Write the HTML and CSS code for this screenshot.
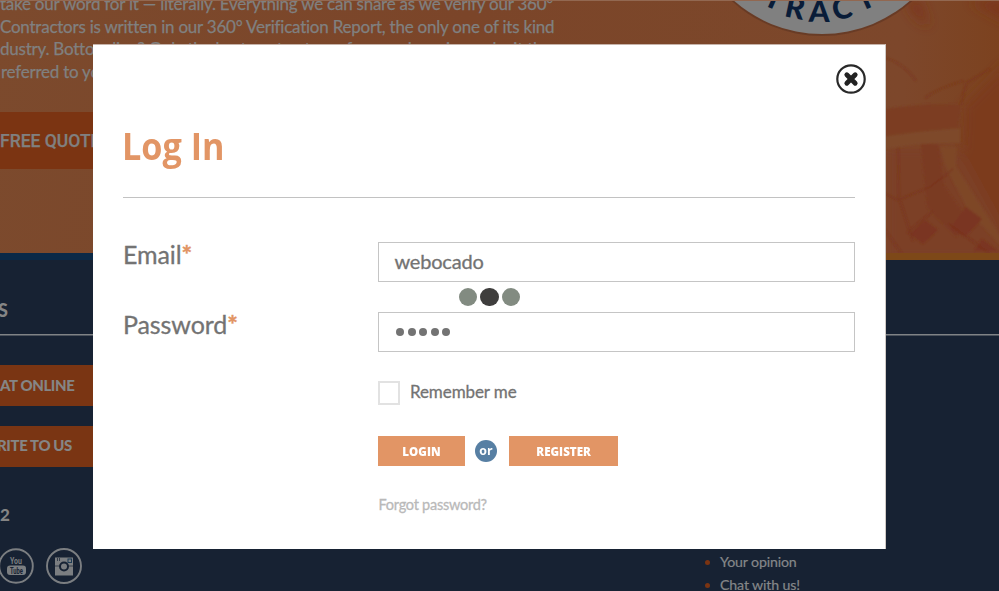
FILE: index.html
```
<!DOCTYPE html>
<html lang="en">
<head>
<meta charset="utf-8">
<title>Log In</title>
<link rel="stylesheet" href="styles.css">
</head>
<body>
<div class="page">
  <section class="hero">
    <svg class="photo" viewBox="0 0 319 253" aria-hidden="true">
      <defs>
        <linearGradient id="warm" x1="0" x2="1"><stop offset="0" stop-color="#7d472b" stop-opacity="0"/><stop offset=".7" stop-color="#7d472b"/><stop offset="1" stop-color="#7c421f"/></linearGradient>
        <filter id="soft"><feGaussianBlur stdDeviation="6"/></filter>
        <filter id="fine"><feGaussianBlur stdDeviation="1.1"/></filter>
      </defs>
      <rect width="319" height="253" fill="url(#warm)"/>
      <g filter="url(#soft)">
        <path d="M284 105L330 60V260L282 170Z" fill="#7c3b1a"/>
        <path d="M225 0H240L249 26L236 16Z M290 0H330V22Z" fill="#7b351b"/>
        <path d="M205 145H278L330 240V260H205Z" fill="#7c4127"/>
      </g>
      <g filter="url(#fine)">
        <path d="M200 109Q245 101 281 104L278 127Q240 130 200 136Z" fill="#7b3c22"/>
        <path d="M200 136Q240 130 280 127V142Q240 141 200 149Z" fill="#7e4829"/>
        <path d="M241 143H258L264 185L290 222L276 236L247 206Z" fill="#7a3a21"/>
        <path d="M260 145L277 146L276 165L325 242V250L288 209L265 165Z" fill="#7e4627"/>
        <path d="M286 206L302 218L285 236L270 228Z M245 219L258 229L243 243L230 233Z M302 238L318 250H294Z" fill="#7a3420"/>
        <path d="M200 190L218 199L250 186L273 168M218 146L219 197L233 240M281 104L286 82L310 68M200 55Q225 62 236 80M283 80Q258 87 245 97M205 229L222 253M227 232L253 210M268 222L310 253" fill="none" stroke="#78311c" stroke-width="1.2" opacity=".8"/>
      </g>
    </svg>
    <div class="pitch">
      <p class="l1">take our word for it — literally. Everything we can share as we verify our 360°</p>
      <p class="l2">Contractors is written in our 360° Verification Report, the only one of its kind</p>
      <p class="l3">dustry. Bottom line? Only the best contractors of any real service make it the</p>
      <p class="l4">referred to you.</p>
      <a class="quote">FREE QUOTE</a>
    </div>
    <svg class="seal" viewBox="0 0 200 40" aria-hidden="true">
      <circle cx="94" cy="-98" r="134" fill="#4c2b1d" opacity=".4"/>
      <circle cx="94" cy="-99" r="133" fill="#808080"/>
      <g class="seal-text">
        <text transform="translate(42 8) rotate(24)">T</text>
        <text transform="translate(65 18) rotate(12)">R</text>
        <text transform="translate(91 22) rotate(1)">A</text>
        <text transform="translate(116 18.500) rotate(-11)">C</text>
        <text transform="translate(141 8) rotate(-24)">T</text>
      </g>
    </svg>
  </section>
  <div class="strip"><span></span><span></span></div>
  <footer class="footer">
    <div class="contact">
      <h3>S</h3>
      <a class="btn">AT ONLINE</a>
      <a class="btn second">RITE TO US</a>
      <p class="phone">2</p>
      <div class="social">
        <svg width="36" height="36" viewBox="0 0 36 36">
          <circle cx="18" cy="18" r="16.800" fill="none" stroke="#7b7e81" stroke-width="1.900"/>
          <text class="you" x="12" y="16" textLength="12" lengthAdjust="spacingAndGlyphs">You</text>
          <rect x="9" y="17.500" width="19" height="9.500" rx="3" fill="#7b7e81"/>
          <text class="tube" x="12" y="25.500" textLength="13" lengthAdjust="spacingAndGlyphs">Tube</text>
        </svg>
        <svg width="36" height="36" viewBox="0 0 36 36">
          <circle cx="18" cy="18" r="17" fill="none" stroke="#7b7e81" stroke-width="1.900"/>
          <path d="M9 9.500h18v18h-18z" fill="#7b7e81"/>
          <path d="M9 18h5M22 18h5M11.500 10v3M13.500 10v3" stroke="#172233" stroke-width=".7"/>
          <rect x="22" y="11" width="3.500" height="3.500" fill="none" stroke="#1c3b55" stroke-width="1"/>
          <circle cx="18" cy="18.500" r="4" fill="#7b7e81" stroke="#172233" stroke-width="2"/>
        </svg>
      </div>
    </div>
    <ul class="links"><li>Your opinion</li><li>Chat with us!</li></ul>
  </footer>
</div>

<div class="modal">
  <div class="close">
    <svg width="32" height="32" viewBox="0 0 32 32"><circle cx="16" cy="16" r="13.700" fill="#fff" stroke="#292929" stroke-width="2.200"/><path d="M11.800 11.800l8.400 8.400M20.200 11.800l-8.400 8.400" stroke="#222" stroke-width="4.800" stroke-linecap="round"/></svg>
  </div>
  <h1><span>Log In</span></h1>
  <form class="form">
    <label class="name">Email<b>*</b></label>
    <div class="field">webocado</div>
    <div class="dots"><i></i><i class="on"></i><i></i></div>
    <label class="name">Password<b>*</b></label>
    <div class="field pass"><i></i><i></i><i></i><i></i><i></i></div>
    <div class="rest">
      <div class="remember"><span class="box"></span><span>Remember me</span></div>
      <div class="actions"><a class="login"><span>LOGIN</span></a><span class="or"><span>or</span></span><a class="register"><span>REGISTER</span></a></div>
      <a class="forgot">Forgot password?</a>
    </div>
  </form>
</div>
</body>
</html>
```
FILE: styles.css
```
* { box-sizing: border-box; }
body { margin: 0; font-family: Lato, "Open Sans", sans-serif; overflow: hidden; }
p, h1, h3, ul { margin: 0; padding: 0; }
.page { width: 999px; height: 591px; overflow: hidden; background: #172233; }

.hero { position: relative; height: 253px; display: flex; justify-content: space-between; background: linear-gradient(100deg, #7c4a2d, #7b4529 45%, #7d492b); border-top: 1px solid #926851; overflow: hidden; }
.photo { position: absolute; right: 0; top: 0; width: 319px; height: 253px; }
.pitch { width: 600px; margin-top: -8px; color: #808080; font-size: 17px; line-height: 22.7px; letter-spacing: -.23px; white-space: nowrap; -webkit-text-stroke: .25px; }
.l4 { margin-left: 1px; }
.quote { display: block; width: 130px; height: 57px; margin-top: 28px; background: #7b3412; font: 500 17.500px/59px Roboto, sans-serif; letter-spacing: 0; }
.seal { position: relative; width: 200px; height: 40px; margin-right: 71px; margin-top: -1px; }
.seal-text { font: 900 30px Lato, sans-serif; fill: #091c38; text-anchor: middle; }

.strip { display: flex; height: 7px; }
.strip span { flex: 1; background: #0b2947; }
.strip span + span { background: #7d4818; }

.footer { display: flex; justify-content: space-between; background: linear-gradient(#808386, #808386) 0 74px / 100% 1.500px no-repeat; height: 331px; }
.contact { width: 110px; color: #858585; }
.contact h3 { margin: 38px 0 0 -2px; font: 900 18px/24px Lato, sans-serif; height: 67px; }
.btn { display: block; height: 41px; background: #7a3513; font: 900 15px/41px Lato, sans-serif; white-space: nowrap; letter-spacing: -.4px; }
.btn.second { margin-top: 20px; line-height: 39px; text-indent: -3px; }
.phone { margin-top: 37px; font: 900 17px/22px Lato, sans-serif; }
.social { display: flex; gap: 12px; margin: 22px 0 0 -2px; }
.you, .tube { font: 700 9.500px Roboto, sans-serif; fill: #7b7e81; }
.tube { fill: #172233; }
.links { width: 279px; margin-top: 291px; list-style: none; color: #858789; font-size: 14.200px; line-height: 22.600px; letter-spacing: -.15px; -webkit-text-stroke: .2px; }
.links li { display: flex; align-items: center; white-space: nowrap; }
.links li::before { content: ""; width: 5px; height: 5px; margin: 1px 10px 0 -15px; border-radius: 50%; background: #7b3412; }

.modal { position: absolute; left: 93px; top: 44px; width: 792.500px; height: 505px; padding: 18px 30px 0; background: #fff; border-top: 1px solid #c6b3a9; border-right: 1px solid #d0cac6; color: #737373; }
.close { display: flex; justify-content: flex-end; height: 33px; margin-right: -12px; }
.modal h1 { height: 102px; border-bottom: 1px solid #c2c2c2; color: #e29565; font: 700 38px/98px "Open Sans", sans-serif; }
h1 span { display: inline-block; margin-left: -1px; transform-origin: 0 50%; transform: scaleX(.9); }
.form { display: grid; grid-template-columns: 255px 477px; margin-top: 44px; -webkit-text-stroke: .3px; }
.name { font-size: 25px; line-height: 25px; letter-spacing: -.1px; white-space: nowrap; }
.name b { color: #e29565; font-weight: 900; }
.field { height: 40px; padding-left: 15.500px; border: 1px solid #c5c5c5; font-size: 20px; line-height: 37px; letter-spacing: -.2px; }
.dots { grid-column: 2; display: flex; gap: 3px; height: 30px; padding: 5.500px 0 0 80.500px; }
.dots i { width: 18.500px; height: 18.500px; border-radius: 50%; background: #828b81; }
.dots .on { background: #3f3e3d; }
.pass { display: flex; align-items: center; gap: 3.500px; padding: 0 0 0 17px; }
.pass i { width: 8px; height: 8px; border-radius: 50%; background: #737373; }
.rest { grid-column: 2; }
.remember { display: flex; align-items: center; gap: 10px; height: 24px; margin-top: 29px; font-size: 17px; line-height: 22px; letter-spacing: -.1px; }
.remember span + span { margin-top: -2px; }
.box { width: 22px; height: 24px; border: 2px solid #e2e2e2; }
.actions { display: flex; align-items: center; height: 30px; margin-top: 30.500px; -webkit-text-stroke: 0; }
.actions a { display: flex; justify-content: center; align-items: center; height: 30px; background: #e29565; color: #fff; font: 800 13px "Open Sans", sans-serif; }
.actions a span { transform: scaleX(.89); }
.login { width: 87px; }
.register { width: 109px; }
.or { display: flex; justify-content: center; align-items: center; width: 22px; height: 22px; margin: 0 12px 0 10px; border-radius: 50%; background: #577fa3; color: #fff; font: 700 13px "Open Sans", sans-serif; }
.or span { margin-top: -2px; transform: scaleX(.95); }
.forgot { display: block; margin: 29.500px 0 0 .5px; color: #b9b9b9; font-size: 14.500px; line-height: 20px; letter-spacing: -.25px; }
```
